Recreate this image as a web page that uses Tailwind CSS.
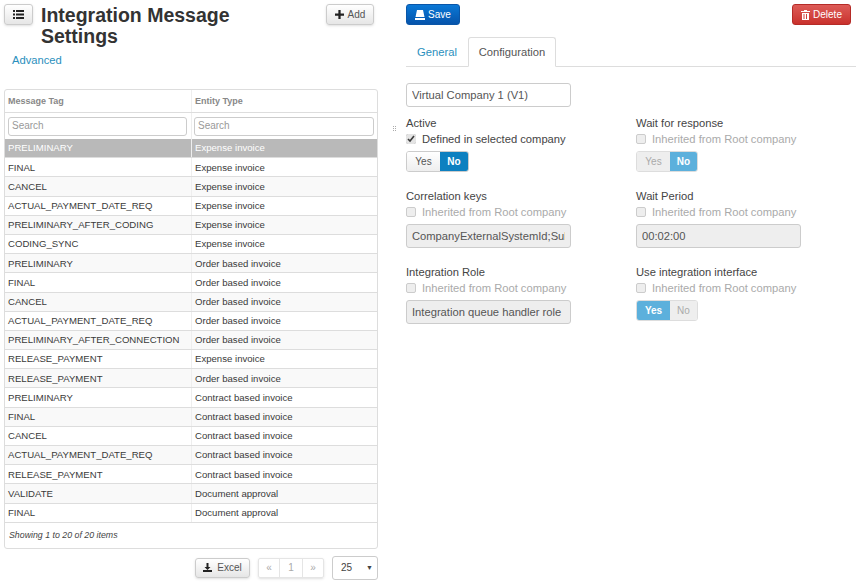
<!DOCTYPE html>
<html lang="en">
<head>
  <meta charset="UTF-8">
  <title>Integration Message Settings</title>
  <script src="https://cdn.jsdelivr.net/npm/@tailwindcss/browser@4"></script>
</head>
<body class="bg-white text-[#333] font-['Liberation_Sans',Arial,sans-serif] h-[587px] w-[860px] overflow-hidden">
  <div class="flex">
    <!-- left pane -->
    <div class="w-[374px] ml-[4px] shrink-0">
      <div class="flex items-start h-[50px] pt-[4px]">
        <button class="w-[29px] h-[21px] border border-[#ccc] rounded-[3px] bg-gradient-to-b from-white to-[#e6e6e6] shadow-sm flex items-center justify-center">
          <svg width="11" height="9" viewBox="0 0 11 9" fill="#222"><rect x="0" y="0" width="2" height="2"/><rect x="3" y="0" width="8" height="2"/><rect x="0" y="3.5" width="2" height="2"/><rect x="3" y="3.5" width="8" height="2"/><rect x="0" y="7" width="2" height="2"/><rect x="3" y="7" width="8" height="2"/></svg>
        </button>
        <h1 class="ml-[8px] mt-[1px] w-[270px] text-[19.5px] leading-[21px] font-bold text-[#333]">Integration Message Settings</h1>
        <button class="ml-auto mr-[4px] w-[48px] h-[21px] border border-[#ccc] rounded-[3px] bg-gradient-to-b from-white to-[#e6e6e6] shadow-sm flex items-center justify-center gap-[4px] text-[10px] text-[#555]">
          <svg width="9" height="9" viewBox="0 0 8 8" fill="#222"><path d="M3 0h2v3h3v2H5v3H3V5H0V3h3z"/></svg>Add
        </button>
      </div>
      <a class="block ml-[8px] text-[11.2px] leading-[20px] text-[#2a8fbd]">Advanced</a>
      <div class="mt-[19px] border border-[#ddd] rounded-[3px] text-[9.6px] text-[#3a3a3a]">
        <div class="grid grid-cols-[187px_1fr] h-[23px] items-center border-b border-[#ddd] font-bold text-[#888] text-[9px]">
          <div class="pl-[3px] pt-[1px] border-r border-[#eee] h-full flex items-center">Message Tag</div>
          <div class="pl-[3px] pt-[1px]">Entity Type</div>
        </div>
        <div class="grid grid-cols-[187px_1fr] h-[26px] items-center">
          <div class="pl-[3px] pr-[4px] border-r border-[#eee] h-full flex items-center"><input class="w-full h-[19px] border border-[#ccc] rounded-[3px] px-[3px] pb-[2px] text-[10px] placeholder:text-[#999]" placeholder="Search"></div>
          <div class="pl-[2px] pr-[3px]"><input class="w-full h-[19px] border border-[#ccc] rounded-[3px] px-[3px] pb-[2px] text-[10px] placeholder:text-[#999]" placeholder="Search"></div>
        </div>
        <div id="rows"></div>
        <div class="h-[25px] flex items-center pl-[4px] italic text-[8.8px] text-[#444]">Showing 1 to 20 of 20 items</div>
      </div>
      <div class="flex items-center justify-end mt-[7px]">
        <button class="w-[55px] h-[20px] border border-[#ccc] rounded-[3px] bg-gradient-to-b from-white to-[#e6e6e6] shadow-sm flex items-center justify-center gap-[5px] text-[10px] text-[#555]">
          <svg width="9" height="9" viewBox="0 0 9 9" fill="#222"><path d="M3.500 0h2v4H7.500L4.500 7 1.500 4h2zM0 7h9v2H0z"/></svg>Excel
        </button>
        <div class="ml-[8px] flex h-[20px] border border-[#e5e5e5] rounded-[2px] text-[10px] text-[#aaa] shadow-sm">
          <span class="w-[21px] flex items-center justify-center border-r border-[#e5e5e5]">«</span>
          <span class="w-[23px] flex items-center justify-center border-r border-[#e5e5e5]">1</span>
          <span class="w-[20px] flex items-center justify-center">»</span>
        </div>
        <div class="ml-[8px] w-[46px] h-[24px] border border-[#ccc] rounded-[3px] flex items-center justify-between pl-[8px] pr-[4px] text-[10px] text-[#444]">25<span class="text-[7px]">▼</span></div>
      </div>
    </div>
    <!-- right pane -->
    <div class="ml-[28px] flex-1 pr-[4px]">
      <div class="flex justify-between pt-[4px] pr-[5px]">
        <button class="w-[54px] h-[21px] rounded-[3px] border border-[#0a56a8] bg-gradient-to-b from-[#0b78d6] to-[#0654ab] text-white text-[10px] flex items-center justify-center gap-[3px]">
          <svg width="10" height="10" viewBox="0 0 10 10" fill="#fff"><path d="M2 0h6l1.500 7H.5zM0 8h10v2H0z"/></svg>Save
        </button>
        <button class="w-[59px] h-[21px] rounded-[3px] border border-[#b52b27] bg-gradient-to-b from-[#dd5b57] to-[#c9302c] text-white text-[10px] flex items-center justify-center gap-[3px]">
          <svg width="9" height="10" viewBox="0 0 9 10" fill="#fff"><path d="M3 0h3v1h3v1H0V1h3zM1 3h7v7H1zM2.500 4v5h1V4zM5 4v5h1V4z" fill-rule="evenodd"/></svg>Delete
        </button>
      </div>
      <div class="flex mt-[12px] h-[30px] border-b border-[#ddd] text-[11.2px]">
        <span class="w-[62px] pt-[2px] flex items-center justify-center text-[#2a8fbd]">General</span>
        <span class="w-[88px] h-[30px] flex items-center justify-center border border-[#ddd] border-b-white rounded-t-[3px] bg-white text-[#555]">Configuration</span>
      </div>
      <input class="block mt-[16px] w-[165px] h-[24px] border border-[#ccc] rounded-[3px] px-[5px] text-[11.2px] text-[#555]" value="Virtual Company 1 (V1)">
      <div class="grid grid-cols-[230px_1fr] grid-rows-[73px_76px_76px] mt-[8px]">
        <div>
          <div class="text-[11.2px] leading-[16px] text-[#444]">Active</div>
          <label class="flex items-center gap-[6px] h-[16px] text-[11.2px] text-[#444]"><input type="checkbox" checked class="w-[10px] h-[10px] accent-[#e4e4e4]">Defined in selected company</label>
          <div class="mt-[4px] flex w-[63px] h-[21px] rounded-[3px] border border-[#ccc] overflow-hidden text-[10px]">
            <span class="w-[33px] flex items-center justify-center bg-gradient-to-b from-white to-[#eee] text-[#555]">Yes</span>
            <span class="flex-1 flex items-center justify-center bg-[#0d80c0] text-white font-bold">No</span>
          </div>
        </div>
        <div>
          <div class="text-[11.2px] leading-[16px] text-[#444]">Wait for response</div>
          <label class="flex items-center gap-[6px] h-[16px] text-[11.2px] text-[#aaa]"><input type="checkbox" class="appearance-none w-[10px] h-[10px] border border-[#ccc] rounded-[2px] bg-[#eee]">Inherited from Root company</label>
          <div class="mt-[4px] flex w-[62px] h-[21px] rounded-[3px] border border-[#ddd] overflow-hidden text-[10px]">
            <span class="w-[33px] flex items-center justify-center bg-[#eee] text-[#aaa]">Yes</span>
            <span class="flex-1 flex items-center justify-center bg-[#5cb0dc] text-white font-bold">No</span>
          </div>
        </div>
        <div>
          <div class="text-[11.2px] leading-[16px] text-[#444]">Correlation keys</div>
          <label class="flex items-center gap-[6px] h-[16px] text-[11.2px] text-[#aaa]"><input type="checkbox" class="appearance-none w-[10px] h-[10px] border border-[#ccc] rounded-[2px] bg-[#eee]">Inherited from Root company</label>
          <input disabled class="block mt-[4px] w-[165px] h-[24px] border border-[#ccc] rounded-[3px] px-[5px] text-[11.2px] text-[#555] bg-[#eee]" value="CompanyExternalSystemId;SubscriptionId">
        </div>
        <div>
          <div class="text-[11.2px] leading-[16px] text-[#444]">Wait Period</div>
          <label class="flex items-center gap-[6px] h-[16px] text-[11.2px] text-[#aaa]"><input type="checkbox" class="appearance-none w-[10px] h-[10px] border border-[#ccc] rounded-[2px] bg-[#eee]">Inherited from Root company</label>
          <input disabled class="block mt-[4px] w-[165px] h-[24px] border border-[#ccc] rounded-[3px] px-[5px] text-[11.2px] text-[#555] bg-[#eee]" value="00:02:00">
        </div>
        <div>
          <div class="text-[11.2px] leading-[16px] text-[#444]">Integration Role</div>
          <label class="flex items-center gap-[6px] h-[16px] text-[11.2px] text-[#aaa]"><input type="checkbox" class="appearance-none w-[10px] h-[10px] border border-[#ccc] rounded-[2px] bg-[#eee]">Inherited from Root company</label>
          <input disabled class="block mt-[4px] w-[165px] h-[24px] border border-[#ccc] rounded-[3px] px-[5px] text-[11.2px] text-[#555] bg-[#eee]" value="Integration queue handler role">
        </div>
        <div>
          <div class="text-[11.2px] leading-[16px] text-[#444]">Use integration interface</div>
          <label class="flex items-center gap-[6px] h-[16px] text-[11.2px] text-[#aaa]"><input type="checkbox" class="appearance-none w-[10px] h-[10px] border border-[#ccc] rounded-[2px] bg-[#eee]">Inherited from Root company</label>
          <div class="mt-[4px] flex w-[62px] h-[21px] rounded-[3px] border border-[#ddd] overflow-hidden text-[10px]">
            <span class="w-[33px] flex items-center justify-center bg-[#5cb0dc] text-white font-bold">Yes</span>
            <span class="flex-1 flex items-center justify-center bg-[#eee] text-[#aaa]">No</span>
          </div>
        </div>
      </div>
    </div>
  </div>
  <!-- splitter handle -->
  <div class="absolute left-[393px] top-[126px] grid grid-cols-2 gap-[1px]">
    <i class="w-[1px] h-[1px] bg-[#aaa]"></i><i class="w-[1px] h-[1px] bg-[#aaa]"></i><i class="w-[1px] h-[1px] bg-[#aaa]"></i><i class="w-[1px] h-[1px] bg-[#aaa]"></i><i class="w-[1px] h-[1px] bg-[#aaa]"></i><i class="w-[1px] h-[1px] bg-[#aaa]"></i>
  </div>
  <script>
    const rows = [
      ["PRELIMINARY","Expense invoice"],["FINAL","Expense invoice"],["CANCEL","Expense invoice"],
      ["ACTUAL_PAYMENT_DATE_REQ","Expense invoice"],["PRELIMINARY_AFTER_CODING","Expense invoice"],["CODING_SYNC","Expense invoice"],
      ["PRELIMINARY","Order based invoice"],["FINAL","Order based invoice"],["CANCEL","Order based invoice"],
      ["ACTUAL_PAYMENT_DATE_REQ","Order based invoice"],["PRELIMINARY_AFTER_CONNECTION","Order based invoice"],["RELEASE_PAYMENT","Expense invoice"],
      ["RELEASE_PAYMENT","Order based invoice"],["PRELIMINARY","Contract based invoice"],["FINAL","Contract based invoice"],
      ["CANCEL","Contract based invoice"],["ACTUAL_PAYMENT_DATE_REQ","Contract based invoice"],["RELEASE_PAYMENT","Contract based invoice"],
      ["VALIDATE","Document approval"],["FINAL","Document approval"]
    ];
    document.getElementById("rows").innerHTML = rows.map((r, i) => {
      const cls = i === 0 ? "bg-[#b9b9b9] text-white" : i % 2 === 0 ? "bg-[#f9f9f9]" : "bg-white";
      return `<div class="grid grid-cols-[187px_1fr] h-[19.2px] items-center border-b border-[#ddd] ${cls}">
        <div class="pl-[3px] pt-[1px] border-r border-[#eee] h-full flex items-center">${r[0]}</div>
        <div class="pl-[3px] pt-[1px]">${r[1]}</div>
      </div>`;
    }).join("");
  </script>
</body>
</html>
